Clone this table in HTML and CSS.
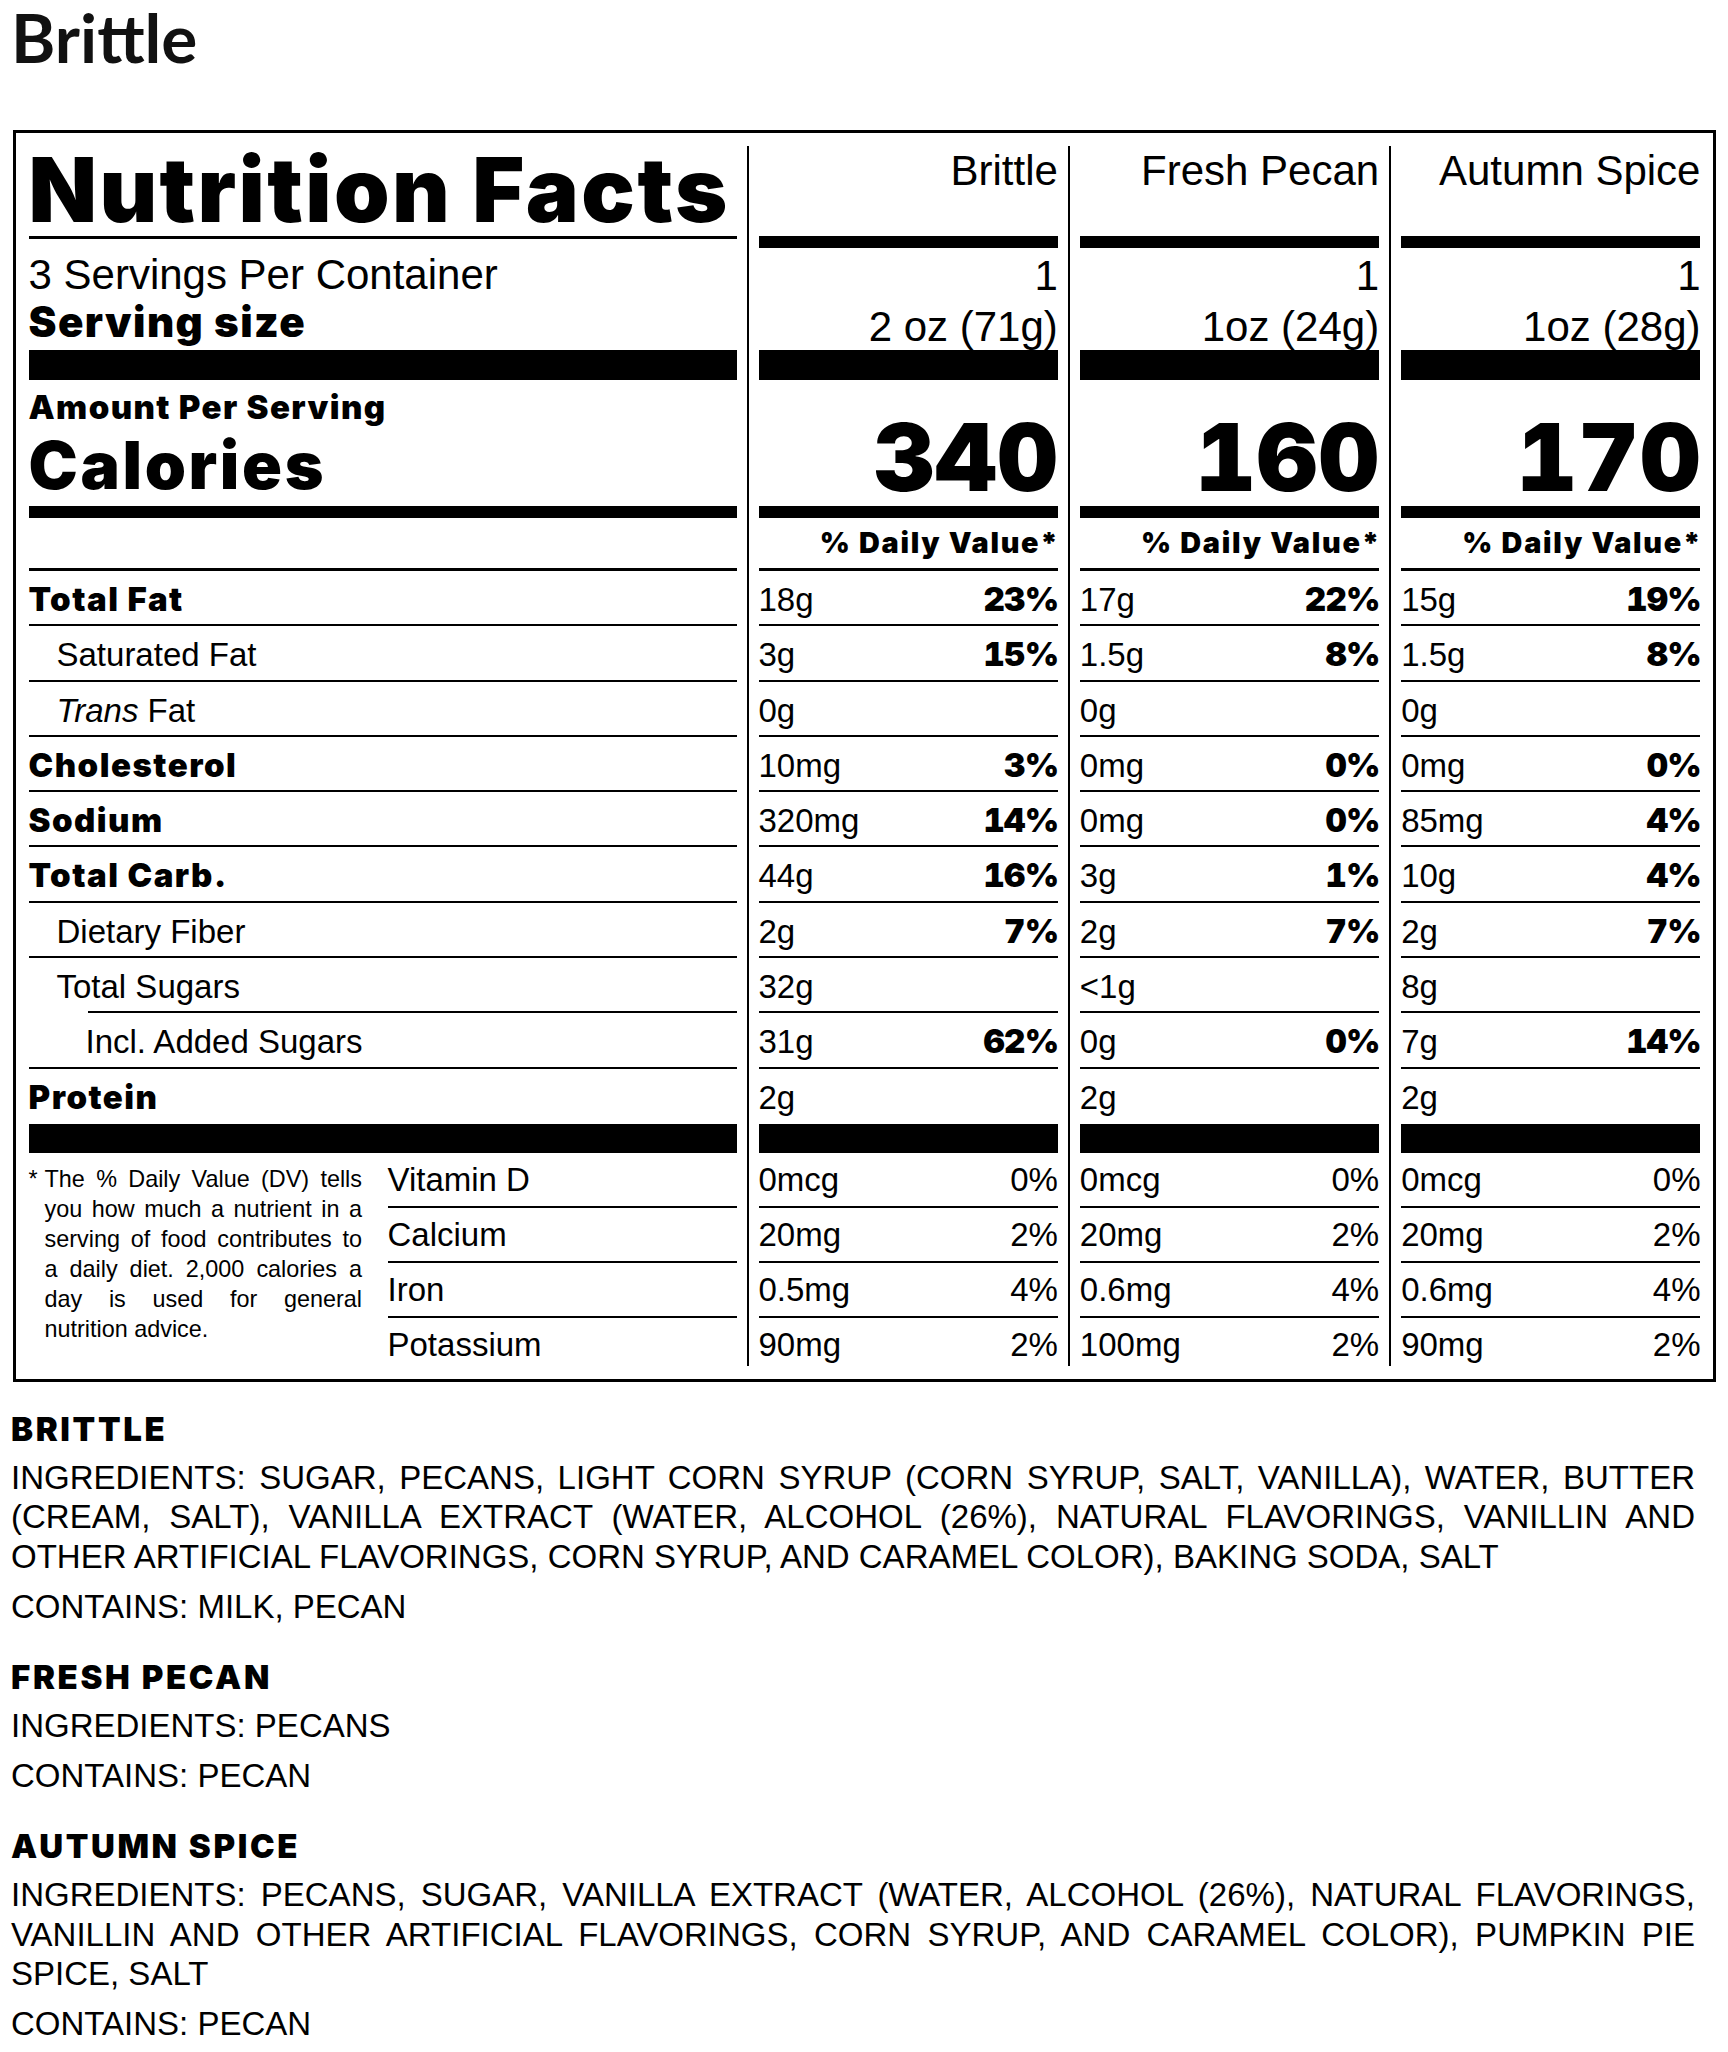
FILE: index.html
```html
<!DOCTYPE html>
<html lang="en">
<head>
<meta charset="utf-8">
<title>Brittle – Nutrition Facts</title>
<link rel="stylesheet" href="styles.css">
</head>
<body>
<div class="page">
  <h1 class="page-title">Brittle</h1>

  <div class="label">
    <!-- label column -->
    <div class="col col-names">
      <div class="nf-head">Nutrition Facts</div>
      <div class="rule3"></div>
      <div class="serv-block">
        <div class="serv-count">3 Servings Per Container</div>
        <div class="serv-size">Serving size</div>
      </div>
      <div class="bar30"></div>
      <div class="cal-block">
        <div class="amount">Amount Per Serving</div>
        <div class="cal-word">Calories</div>
      </div>
      <div class="bar12"></div>
      <div class="dv-blank"></div>
      <div class="rule3"></div>
      <div class="nrow"><span class="heavy">Total Fat</span></div>
      <div class="nrow"><span class="ind1">Saturated Fat</span></div>
      <div class="nrow"><span class="ind1"><i>Trans</i> Fat</span></div>
      <div class="nrow"><span class="heavy">Cholesterol</span></div>
      <div class="nrow"><span class="heavy">Sodium</span></div>
      <div class="nrow"><span class="heavy">Total Carb.</span></div>
      <div class="nrow"><span class="ind1">Dietary Fiber</span></div>
      <div class="nrow sugars-row"><span class="ind1">Total Sugars</span></div>
      <div class="nrow"><span class="ind2">Incl. Added Sugars</span></div>
      <div class="nrow protein"><span class="heavy">Protein</span></div>
      <div class="bar29"></div>
      <div class="vit-area">
        <div class="footnote">
          <span class="ast">*</span>
          <p class="foot-text">The % Daily Value (DV) tells you how much a nutrient in a serving of food contributes to a daily diet. 2,000 calories a day is used for general nutrition advice.</p>
        </div>
        <div class="vit-labels">
          <div class="vrow">Vitamin D</div>
          <div class="vrow">Calcium</div>
          <div class="vrow">Iron</div>
          <div class="vrow">Potassium</div>
        </div>
      </div>
    </div>

    <!-- Brittle -->
    <div class="col col-data">
      <div class="pname">Brittle</div>
      <div class="bar12"></div>
      <div class="serv-vals">
        <div class="sv-count">1</div>
        <div class="sv-size">2 oz (71g)</div>
      </div>
      <div class="bar30"></div>
      <div class="cal-val">340</div>
      <div class="bar12"></div>
      <div class="dv-head">% Daily Value*</div>
      <div class="rule3"></div>
      <div class="nrow"><span>18g</span><span class="pct">23%</span></div>
      <div class="nrow"><span>3g</span><span class="pct">15%</span></div>
      <div class="nrow"><span>0g</span></div>
      <div class="nrow"><span>10mg</span><span class="pct">3%</span></div>
      <div class="nrow"><span>320mg</span><span class="pct">14%</span></div>
      <div class="nrow"><span>44g</span><span class="pct">16%</span></div>
      <div class="nrow"><span>2g</span><span class="pct">7%</span></div>
      <div class="nrow"><span>32g</span></div>
      <div class="nrow"><span>31g</span><span class="pct">62%</span></div>
      <div class="nrow protein"><span>2g</span></div>
      <div class="bar29"></div>
      <div class="vit-vals">
        <div class="vrow"><span>0mcg</span><span>0%</span></div>
        <div class="vrow"><span>20mg</span><span>2%</span></div>
        <div class="vrow"><span>0.5mg</span><span>4%</span></div>
        <div class="vrow"><span>90mg</span><span>2%</span></div>
      </div>
    </div>

    <!-- Fresh Pecan -->
    <div class="col col-data">
      <div class="pname">Fresh Pecan</div>
      <div class="bar12"></div>
      <div class="serv-vals">
        <div class="sv-count">1</div>
        <div class="sv-size">1oz (24g)</div>
      </div>
      <div class="bar30"></div>
      <div class="cal-val">160</div>
      <div class="bar12"></div>
      <div class="dv-head">% Daily Value*</div>
      <div class="rule3"></div>
      <div class="nrow"><span>17g</span><span class="pct">22%</span></div>
      <div class="nrow"><span>1.5g</span><span class="pct">8%</span></div>
      <div class="nrow"><span>0g</span></div>
      <div class="nrow"><span>0mg</span><span class="pct">0%</span></div>
      <div class="nrow"><span>0mg</span><span class="pct">0%</span></div>
      <div class="nrow"><span>3g</span><span class="pct">1%</span></div>
      <div class="nrow"><span>2g</span><span class="pct">7%</span></div>
      <div class="nrow"><span>&lt;1g</span></div>
      <div class="nrow"><span>0g</span><span class="pct">0%</span></div>
      <div class="nrow protein"><span>2g</span></div>
      <div class="bar29"></div>
      <div class="vit-vals">
        <div class="vrow"><span>0mcg</span><span>0%</span></div>
        <div class="vrow"><span>20mg</span><span>2%</span></div>
        <div class="vrow"><span>0.6mg</span><span>4%</span></div>
        <div class="vrow"><span>100mg</span><span>2%</span></div>
      </div>
    </div>

    <!-- Autumn Spice -->
    <div class="col col-data">
      <div class="pname">Autumn Spice</div>
      <div class="bar12"></div>
      <div class="serv-vals">
        <div class="sv-count">1</div>
        <div class="sv-size">1oz (28g)</div>
      </div>
      <div class="bar30"></div>
      <div class="cal-val">170</div>
      <div class="bar12"></div>
      <div class="dv-head">% Daily Value*</div>
      <div class="rule3"></div>
      <div class="nrow"><span>15g</span><span class="pct">19%</span></div>
      <div class="nrow"><span>1.5g</span><span class="pct">8%</span></div>
      <div class="nrow"><span>0g</span></div>
      <div class="nrow"><span>0mg</span><span class="pct">0%</span></div>
      <div class="nrow"><span>85mg</span><span class="pct">4%</span></div>
      <div class="nrow"><span>10g</span><span class="pct">4%</span></div>
      <div class="nrow"><span>2g</span><span class="pct">7%</span></div>
      <div class="nrow"><span>8g</span></div>
      <div class="nrow"><span>7g</span><span class="pct">14%</span></div>
      <div class="nrow protein"><span>2g</span></div>
      <div class="bar29"></div>
      <div class="vit-vals">
        <div class="vrow"><span>0mcg</span><span>0%</span></div>
        <div class="vrow"><span>20mg</span><span>2%</span></div>
        <div class="vrow"><span>0.6mg</span><span>4%</span></div>
        <div class="vrow"><span>90mg</span><span>2%</span></div>
      </div>
    </div>
  </div>

  <div class="ingredients">
    <section class="ing-section">
      <h2 class="ing-head">BRITTLE</h2>
      <p class="ing-text">INGREDIENTS: SUGAR, PECANS, LIGHT CORN SYRUP (CORN SYRUP, SALT, VANILLA), WATER, BUTTER (CREAM, SALT), VANILLA EXTRACT (WATER, ALCOHOL (26%), NATURAL FLAVORINGS, VANILLIN AND OTHER ARTIFICIAL FLAVORINGS, CORN SYRUP, AND CARAMEL COLOR), BAKING SODA, SALT</p>
      <p class="ing-text ing-contains">CONTAINS: MILK, PECAN</p>
    </section>
    <section class="ing-section">
      <h2 class="ing-head">FRESH PECAN</h2>
      <p class="ing-text">INGREDIENTS: PECANS</p>
      <p class="ing-text ing-contains">CONTAINS: PECAN</p>
    </section>
    <section class="ing-section">
      <h2 class="ing-head">AUTUMN SPICE</h2>
      <p class="ing-text">INGREDIENTS: PECANS, SUGAR, VANILLA EXTRACT (WATER, ALCOHOL (26%), NATURAL FLAVORINGS, VANILLIN AND OTHER ARTIFICIAL FLAVORINGS, CORN SYRUP, AND CARAMEL COLOR), PUMPKIN PIE SPICE, SALT</p>
      <p class="ing-text ing-contains">CONTAINS: PECAN</p>
    </section>
  </div>
</div>
</body>
</html>
```

FILE: styles.css
```css
* {
  box-sizing: border-box;
}

html,
body {
  margin: 0;
  padding: 0;
  background: #fff;
}

body {
  font-family: "Liberation Sans", Arial, sans-serif;
  color: #000;
}

.page {
  width: 1728px;
  padding: 0 11px;
}

.page-title {
  font-family: Lato, "Open Sans", sans-serif;
  font-weight: 700;
  font-size: 67.5px;
  line-height: 70px;
  margin: 2.3px 0 58.2px;
  color: #111;
}

.heavy,
.pct,
.nf-head,
.serv-size,
.amount,
.cal-word,
.cal-val,
.dv-head,
.ing-head {
  font-family: Inter, "DejaVu Sans", sans-serif;
  font-weight: 900;
}

.heavy {
  letter-spacing: 0.045em;
}

.pct {
  font-variant-numeric: tabular-nums;
  letter-spacing: -0.02em;
  margin-right: -0.02em;
}

/* ---------- label box ---------- */
.label {
  width: 1703px;
  margin: 0 auto;
  border: 3px solid #000;
  padding: 12.5px 12px 12.5px 13px;
  display: flex;
}

.col-names {
  flex: 0 0 718px;
  padding-right: 10px;
}

.col-data {
  flex: 1 1 0;
  min-width: 0;
  border-left: 2px solid #000;
  padding: 0 10px;
}

.col-data:last-child {
  padding-right: 0;
}

.rule3 {
  height: 3px;
  background: #000;
}

.bar12 {
  height: 12px;
  background: #000;
}

.bar29 {
  height: 29px;
  background: #000;
}

.bar30 {
  height: 30px;
  background: #000;
}

/* header */
.nf-head {
  height: 90px;
  font-size: 89px;
  line-height: 87px;
  letter-spacing: 0.027em;
  white-space: nowrap;
}

.pname {
  height: 90px;
  padding-top: 3.8px;
  font-size: 42px;
  line-height: 42px;
  text-align: right;
  white-space: nowrap;
}

/* servings */
.serv-block {
  height: 111px;
  padding-top: 15.5px;
}

.serv-count {
  font-size: 42px;
  line-height: 42px;
  white-space: nowrap;
}

.serv-size {
  font-size: 42px;
  line-height: 42px;
  margin-top: 5px;
  letter-spacing: 0.034em;
}

.serv-vals {
  height: 102px;
  padding-top: 6.6px;
  font-size: 42px;
  line-height: 42px;
  text-align: right;
  white-space: nowrap;
}

.sv-size {
  margin-top: 9px;
}

/* calories */
.cal-block {
  height: 126px;
  padding-top: 10.9px;
}

.amount {
  font-size: 33px;
  line-height: 33px;
  letter-spacing: 0.042em;
}

.cal-word {
  font-size: 66px;
  line-height: 66px;
  margin-top: 8.1px;
  letter-spacing: 0.04em;
}

.cal-val {
  height: 126px;
  padding-top: 30.5px;
  font-size: 94px;
  line-height: 94px;
  text-align: right;
  font-variant-numeric: tabular-nums;
  letter-spacing: 0.012em;
  margin-right: -0.012em;
}

/* daily value header */
.dv-blank {
  height: 50px;
}

.dv-head {
  height: 50px;
  padding-top: 10.3px;
  font-size: 28.8px;
  line-height: 29px;
  text-align: right;
  white-space: nowrap;
  letter-spacing: 0.06em;
  margin-right: -0.06em;
}

/* nutrient rows */
.nrow {
  height: 55.3px;
  border-bottom: 2px solid #000;
  padding-top: 12px;
  font-size: 33px;
  line-height: 33px;
  display: flex;
  justify-content: space-between;
  align-items: baseline;
  white-space: nowrap;
}

.nrow.protein {
  border-bottom: 0;
}

.nrow.sugars-row {
  border-bottom: 0;
  background: linear-gradient(#000, #000) no-repeat right bottom / calc(100% - 59px) 2px;
}

.ind1 {
  padding-left: 28px;
}

.ind2 {
  padding-left: 57px;
}

/* vitamins */
.vit-area {
  display: flex;
}

.footnote {
  flex: 0 0 333.5px;
  display: flex;
  padding-top: 10.9px;
  font-size: 23.4px;
  line-height: 30px;
}

.ast {
  flex: 0 0 16px;
}

.foot-text {
  margin: 0;
  flex: 1;
  text-align: justify;
}

.vit-labels {
  flex: 1;
  margin-left: 25.5px;
}

.vrow {
  height: 55px;
  border-bottom: 2px solid #000;
  padding-top: 10px;
  font-size: 33px;
  line-height: 33px;
  display: flex;
  justify-content: space-between;
  align-items: baseline;
  white-space: nowrap;
}

.vrow:last-child {
  height: 48.2px;
  border-bottom: 0;
}

/* ingredients */
.ingredients {
  width: 1684px;
  padding-top: 28.5px;
}

.ing-section + .ing-section {
  margin-top: 31.8px;
}

.ing-head {
  font-size: 33px;
  line-height: 39.6px;
  margin: 0 0 8px;
  letter-spacing: 0.08em;
}

.ing-text {
  margin: 0;
  font-size: 33px;
  line-height: 39.6px;
  text-align: justify;
}

.ing-contains {
  margin-top: 10.5px;
}
```
